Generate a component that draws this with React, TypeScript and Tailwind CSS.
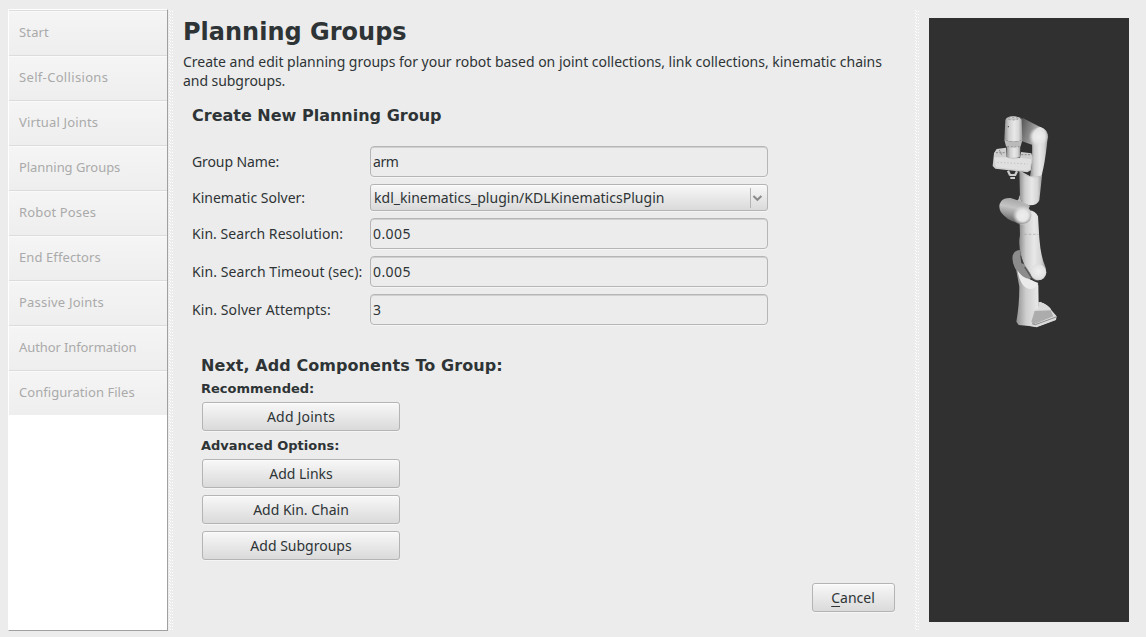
import type { ReactNode } from "react";

const steps: [string, string][] = [
  ["Start", "tracking-[0.15px]"],
  ["Self-Collisions", "tracking-[0.33px]"],
  ["Virtual Joints", "tracking-[0.15px]"],
  ["Planning Groups", "tracking-[-0.05px]"],
  ["Robot Poses", "tracking-[0.15px]"],
  ["End Effectors", "tracking-[0.1px]"],
  ["Passive Joints", "tracking-[0.2px]"],
  ["Author Information", "tracking-[-0.1px]"],
  ["Configuration Files", "tracking-[0.05px]"],
];

function Splitter() {
  return (
    <div className="mt-[10px] flex h-[620px] w-[4px] shrink-0">
      <div className="w-px bg-[repeating-linear-gradient(to_bottom,#ffffff_0,#ffffff_1px,transparent_1px,transparent_3px)]" />
      <div className="mt-px w-px bg-[repeating-linear-gradient(to_bottom,#ffffff_0,#ffffff_1px,transparent_1px,transparent_3px)]" />
      <div className="mt-px ml-px w-px bg-[repeating-linear-gradient(to_bottom,#ffffff_0,#ffffff_1px,transparent_1px,transparent_3px)]" />
    </div>
  );
}

function Button({ children, className }: { children: ReactNode; className: string }) {
  return (
    <button
      type="button"
      className={
        "flex h-[29px] items-center justify-center rounded-[3px] border border-[#b4b4b4] bg-linear-to-b from-[#f8f8f8] to-[#dadada] leading-[19px] shadow-[0_1px_0_#f5f5f5,inset_0_1px_0_#fcfcfc] " +
        className
      }
    >
      {children}
    </button>
  );
}

function Field({ label, value, labelClass }: { label: string; value: string; labelClass: string }) {
  return (
    <div className="flex h-[31px] items-center">
      <div className={"w-[178px] shrink-0 whitespace-nowrap " + labelClass}>{label}</div>
      <div className="flex h-[31px] w-[398px] items-center rounded-[4px] border border-[#b6b6b6] pl-[2px] shadow-[0_1px_0_#f5f5f5,inset_0_1px_0_#d0d0d0]">
        <span className={value === "arm" ? "tracking-[-0.4px]" : "tracking-[0.4px]"}>{value}</span>
      </div>
    </div>
  );
}

function Robot() {
  return (
    <svg className="mt-[87px] ml-[51px] h-[230px] w-[90px]" viewBox="0 0 270 690">
      <defs>
        <linearGradient id="tube">
          <stop offset="0" stopColor="#8e8e8e" />
          <stop offset="0.25" stopColor="#cecece" />
          <stop offset="0.55" stopColor="#e8e8e8" />
          <stop offset="0.8" stopColor="#d6d6d6" />
          <stop offset="1" stopColor="#9c9c9c" />
        </linearGradient>
        <linearGradient id="arm" x1="0" y1="0.3" x2="1" y2="0.6">
          <stop offset="0" stopColor="#4c4c4c" />
          <stop offset="0.45" stopColor="#8c8c8c" />
          <stop offset="0.85" stopColor="#d4d4d4" />
        </linearGradient>
        <linearGradient id="pod" x1="0.45" y1="0" x2="0.2" y2="1">
          <stop offset="0" stopColor="#a4a4a4" />
          <stop offset="0.35" stopColor="#c4c4c4" />
          <stop offset="0.65" stopColor="#929292" />
          <stop offset="1" stopColor="#484848" />
        </linearGradient>
        <radialGradient id="ball" cx="0.5" cy="0.45" r="0.6">
          <stop offset="0" stopColor="#f0f0f0" />
          <stop offset="0.7" stopColor="#e2e2e2" />
          <stop offset="1" stopColor="#c6c6c6" />
        </radialGradient>
        <radialGradient id="glow">
          <stop offset="0" stopColor="#eeeeee" />
          <stop offset="0.55" stopColor="#e6e6e6" />
          <stop offset="1" stopColor="#dedede" stopOpacity="0" />
        </radialGradient>
      </defs>
      {/* upper elbow and forearm */}
      <path d="M112 38 L130 40 L176 64 Q203 72 203 98 L172 120 L158 120 L124 108 Z" fill="url(#arm)" />
      <path d="M155 92 Q160 72 180 66 Q204 72 203 98 Q198 150 190 190 L184 216 L150 214 Q160 170 155 92Z" fill="url(#tube)" />
      <circle cx="176" cy="95" r="30" fill="url(#glow)" />
      <path d="M118 196 L150 214 L186 212 L178 286 Q172 302 148 301 Q126 298 120 278Z" fill="url(#tube)" />
      <path d="M120 200 Q146 222 184 214" fill="none" stroke="#bcbcbc" strokeWidth="2" />
      {/* wrist */}
      <path d="M76 45 Q80 34 99 34 Q118 34 125 44 L127 105 Q100 116 73 104Z" fill="url(#tube)" />
      <ellipse cx="99" cy="41" rx="16" ry="4" fill="#c6c6c6" stroke="#808080" strokeWidth="2" strokeDasharray="6 6" />
      <path d="M73 104 Q100 115 127 105 L122 124 Q100 136 78 124Z" fill="#bababa" />
      <path d="M80 122 Q100 134 121 122 L120 155 Q100 164 80 155Z" fill="url(#tube)" />
      <circle cx="85" cy="65" r="2" fill="#444" />
      <path d="M84 125 H118" stroke="#777" strokeWidth="2" strokeDasharray="3 7" />
      {/* gripper */}
      <path d="M42 144 L50 132 L78 128 L80 157 L120 158 L123 141 L154 145 L158 158 L153 196 L142 202 L46 191 L38 183Z" fill="#cecece" />
      <path d="M42 157 L80 157 Q100 168 120 158 L154 163 L150 192 L140 197 L48 187Z" fill="#e0e0e0" />
      <path d="M48 143 H77 M58 135 L66 151 M124 149 H153" stroke="#888" strokeWidth="3" strokeDasharray="6 4" />
      <path d="M52 172 L144 177" stroke="#b0b0b0" strokeWidth="2" strokeDasharray="4 6" />
      <path d="M84 197 L90 210 M111 199 L105 211" fill="none" stroke="#c8c8c8" strokeWidth="7" />
      <path d="M88 210 H108 M91 219 H105" stroke="#cccccc" strokeWidth="6" />
      {/* middle joint */}
      <path d="M118 270 L124 288 L150 303 L142 318 L106 292 L116 282Z" fill="#b8b8b8" />
      <path d="M118 325 Q160 305 174 334 L178 400 Q182 455 197 488 Q202 506 190 520 Q176 530 160 518 L134 484 Q112 430 120 390 Z" fill="url(#tube)" />
      <path d="M120 388 H176" stroke="#a4a4a4" strokeWidth="2" strokeDasharray="8 5" />
      <path d="M64 288 Q72 278 92 279 Q126 288 146 310 Q160 324 150 346 Q138 362 112 354 Q78 344 62 320 Q53 302 64 288Z" fill="url(#pod)" />
      <circle cx="128" cy="332" r="30" fill="url(#glow)" />
      {/* lower joint */}
      <path d="M98 452 Q103 435 121 435 Q122 466 144 494 L156 516 L146 526 Q122 516 105 490 Q95 470 98 452Z" fill="#8c8c8c" />
      <path d="M120 446 L132 478 L124 474Z" fill="#3c3c3c" />
      <path d="M108 492 Q122 516 148 522 Q168 532 175 540 L176 606 L180 590 Q206 600 214 616 L228 632 L228 644 L170 665 L116 660 L109 650 Q118 600 118 545Z" fill="url(#tube)" />
      <path d="M112 496 Q122 548 148 552 Q168 552 175 534 L144 522 Q124 516 112 496Z" fill="#ebebeb" />
      <path d="M175 590 Q208 598 215 617 L230 634 L228 645 L170 667 L150 663 L152 628 Q158 614 175 612Z" fill="#dadada" />
      <path d="M164 618 L212 616 L220 634 L162 658 L154 650Z" fill="#acacac" />
      <path d="M156 656 L166 659 L228 636" fill="none" stroke="#8c8c8c" strokeWidth="3" />
      <path d="M134 486 L152 514 Q160 526 176 527" fill="none" stroke="#555" strokeWidth="4" />
      <circle cx="175" cy="502" r="24" fill="url(#ball)" />
    </svg>
  );
}

export default function App() {
  return (
    <div className="flex h-[637px] w-[1146px] overflow-hidden bg-[#ececec] font-['Noto_Sans',sans-serif] text-[14px] leading-[19px] text-[#2e3436]">
      <nav className="mt-[9px] ml-[8px] h-[622px] w-[160px] shrink-0 border border-t-white border-r-[#a0a0a0] border-b-[#a0a0a0] border-l-white bg-white text-[13px] text-[#aaaaaa]">
        {steps.map(([name, tracking]) => (
          <div
            key={name}
            className={
              "flex h-[45px] items-center border-t border-[#dcdcdc] bg-linear-to-b from-[#f5f5f5] to-[#eeeeee] pb-[2px] pl-[10px] whitespace-nowrap shadow-[inset_0_1px_0_#fafafa] " +
              tracking
            }
          >
            {name}
          </div>
        ))}
      </nav>
      <div className="ml-px flex">
        <Splitter />
      </div>
      <main className="flex w-[742px] shrink-0 flex-col pt-[18px] pl-[10px]">
        <h1 className="font-['DejaVu_Sans',sans-serif] text-[24px] leading-[28px] font-bold">Planning Groups</h1>
        <p className="mt-[6px] whitespace-nowrap">
          <span className="tracking-[-0.012px]">
            Create and edit planning groups for your robot based on joint collections, link collections, kinematic chains
          </span>
          <br />
          <span className="tracking-[-0.05px]">and subgroups.</span>
        </p>
        <h2 className="mt-[16px] ml-[9px] font-['DejaVu_Sans',sans-serif] text-[16px] leading-[20px] font-bold">
          Create New Planning Group
        </h2>
        <div className="mt-[20px] ml-[9px] flex flex-col gap-[7px]">
          <Field label="Group Name:" value="arm" labelClass="tracking-[-0.1px]" />
          <div className="flex h-[27px] items-center">
            <div className="w-[178px] shrink-0">Kinematic Solver:</div>
            <div className="flex h-[27px] w-[398px] items-center rounded-[3px] border border-[#b4b4b4] bg-linear-to-b from-[#f8f8f8] to-[#dadada] pl-[3px] shadow-[0_1px_0_#f5f5f5,inset_0_1px_0_#fcfcfc]">
              <span className="flex-1 tracking-[0.025px]">kdl_kinematics_plugin/KDLKinematicsPlugin</span>
              <span className="h-[20px] w-px bg-[#b4b4b4]" />
              <svg className="mr-[4px] ml-[1px] h-[10px] w-[11px]" viewBox="0 0 11 10" fill="none">
                <path d="M1.4 3 L5.4 6.8 L9.4 3" stroke="#8a8a8a" strokeWidth="2" />
              </svg>
            </div>
          </div>
          <Field label="Kin. Search Resolution:" value="0.005" labelClass="tracking-[0.05px]" />
          <Field label="Kin. Search Timeout (sec):" value="0.005" labelClass="tracking-[0.09px]" />
          <Field label="Kin. Solver Attempts:" value="3" labelClass="tracking-[0.1px]" />
        </div>
        <section className="mt-[31px] ml-[18px] font-['DejaVu_Sans',sans-serif]">
          <h2 className="text-[16px] leading-[20px] font-bold tracking-[0.07px]">Next, Add Components To Group:</h2>
          <h3 className="mt-[3px] text-[13px] leading-[20px] font-bold">Recommended:</h3>
          <div className="mt-[3px] ml-px font-['Noto_Sans',sans-serif]">
            <Button className="w-[198px] tracking-[0.2px]">Add Joints</Button>
          </div>
          <h3 className="mt-[5px] text-[13px] leading-[20px] font-bold">Advanced Options:</h3>
          <div className="mt-[3px] ml-px flex flex-col gap-[7px] font-['Noto_Sans',sans-serif]">
            <Button className="w-[198px]">Add Links</Button>
            <Button className="w-[198px]">Add Kin. Chain</Button>
            <Button className="w-[198px]">Add Subgroups</Button>
          </div>
        </section>
        <div className="mt-[23px] mr-[20px] flex justify-end">
          <Button className="w-[83px] pr-[1px]">
            <span>
              <span className="underline decoration-1 underline-offset-[3px]">C</span>ancel
            </span>
          </Button>
        </div>
      </main>
      <Splitter />
      <aside className="mt-[18px] ml-[10px] h-[604px] w-[200px] shrink-0 bg-[#303030]">
        <Robot />
      </aside>
    </div>
  );
}
